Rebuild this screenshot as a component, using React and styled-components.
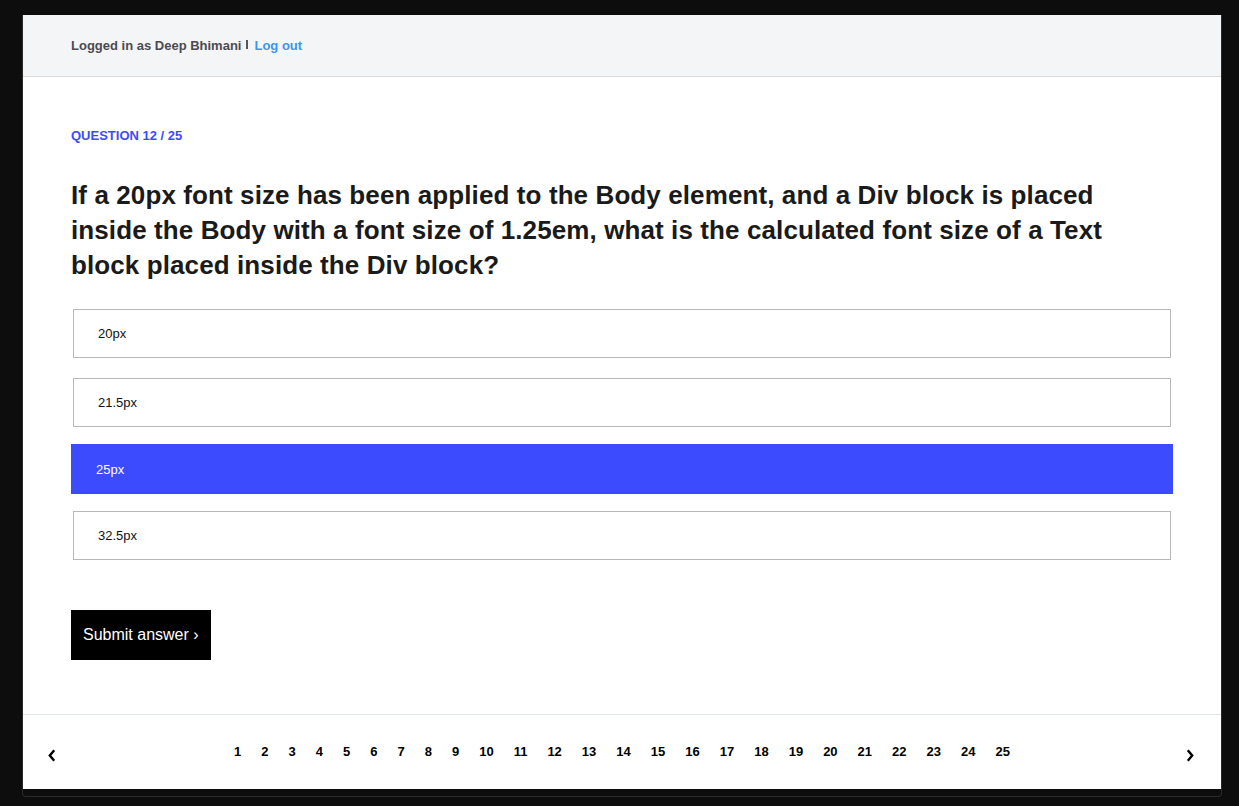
import React from 'react';
import styled, { createGlobalStyle } from 'styled-components';

const options = ['20px', '21.5px', '25px', '32.5px'];
const selected = 2;
const pages = Array.from({ length: 25 }, (_, i) => i + 1);

const App = () => {
  return (
    <>
      <GlobalStyle />
      <Frame>
        <Panel>
          <Header>
            <UserName>Logged in as Deep Bhimani</UserName>
            <Divider />
            <LogOut href="#">Log out</LogOut>
          </Header>
          <Main>
            <Counter>Question 12 / 25</Counter>
            <Question>
              If a 20px font size has been applied to the Body element, and a
              Div block is placed inside the Body with a font size of 1.25em,
              what is the calculated font size of a Text block placed inside
              the Div block?
            </Question>
            <Options>
              {options.map((opt, i) => (
                <Option key={opt} active={i === selected}>
                  {opt}
                </Option>
              ))}
            </Options>
            <SubmitButton>Submit answer ›</SubmitButton>
          </Main>
          <Footer>
            <Arrow>
              <svg width="8" height="13" viewBox="0 0 8 13">
                <path d="M6.2 1.2 L1.8 6.5 L6.2 11.8" fill="none" stroke="#000" strokeWidth="2.4" />
              </svg>
            </Arrow>
            <Pages>
              {pages.map((p) => (
                <Page key={p}>{p}</Page>
              ))}
            </Pages>
            <Arrow>
              <svg width="8" height="13" viewBox="0 0 8 13">
                <path d="M1.8 1.2 L6.2 6.5 L1.8 11.8" fill="none" stroke="#000" strokeWidth="2.4" />
              </svg>
            </Arrow>
          </Footer>
        </Panel>
      </Frame>
    </>
  );
};

export default App;

const GlobalStyle = createGlobalStyle`
  body {
    margin: 0;
    background: #0d0d0d;
    font-family: "Liberation Sans", Arial, Helvetica, sans-serif;
  }
`;

const Frame = styled.div`
  margin: 15px 17px 0 22px;
  padding-bottom: 7px;
  border: 1px solid #2a2a2a;
  border-top: none;
  border-radius: 0 0 4px 4px;
`;

const Panel = styled.div`
  background: #fff;
`;

const Header = styled.div`
  height: 61px;
  display: flex;
  align-items: center;
  padding-left: 48px;
  background: #f4f5f7;
  border-bottom: 1px solid #dadbdd;
  font-size: 13px;
  font-weight: 700;
`;

const UserName = styled.span`
  color: #4b4b50;
`;

const Divider = styled.span`
  width: 2px;
  height: 9px;
  margin: -3px 6px 0 5px;
  background: #55555a;
`;

const LogOut = styled.a`
  color: #3898ec;
  text-decoration: none;
`;

const Main = styled.div`
  padding: 52px 48px 54px;
`;

const Counter = styled.div`
  color: #3d4bff;
  font-size: 13px;
  font-weight: 700;
  line-height: 14px;
  text-transform: uppercase;
`;

const Question = styled.h1`
  max-width: 1060px;
  margin: 35px 0 26px;
  color: #1a1a1a;
  font-size: 26px;
  font-weight: 700;
  line-height: 35px;
  letter-spacing: 0.1px;
`;

const Options = styled.div`
  display: flex;
  flex-direction: column;
  gap: 17px;
`;

const Option = styled.div`
  height: ${(p) => (p.active ? '50px' : '49px')};
  margin: 0 ${(p) => (p.active ? '0' : '2px')};
  display: flex;
  align-items: center;
  padding-left: ${(p) => (p.active ? '25px' : '24px')};
  box-sizing: border-box;
  border: ${(p) => (p.active ? 'none' : '1px solid #b8b8b8')};
  background: ${(p) => (p.active ? '#3d4bff' : '#fff')};
  color: ${(p) => (p.active ? '#fff' : '#111')};
  font-size: 13px;

  &:first-child {
    margin-bottom: 3px;
  }
`;

const SubmitButton = styled.button`
  margin-top: 50px;
  height: 50px;
  padding: 0 12px;
  border: none;
  background: #000;
  color: #fff;
  font-family: inherit;
  font-size: 16px;
`;

const Footer = styled.div`
  height: 74px;
  display: flex;
  align-items: center;
  justify-content: space-between;
  padding: 0 27px 0 25px;
  border-top: 1px solid #e0e6e8;
`;

const Arrow = styled.div`
  display: flex;
  padding-top: 7px;
`;

const Pages = styled.div`
  display: flex;
  margin: -2px 0 0 2px;
`;

const Page = styled.span`
  padding: 0 10px;
  color: #000;
  font-size: 13px;
  font-weight: 700;
`;
